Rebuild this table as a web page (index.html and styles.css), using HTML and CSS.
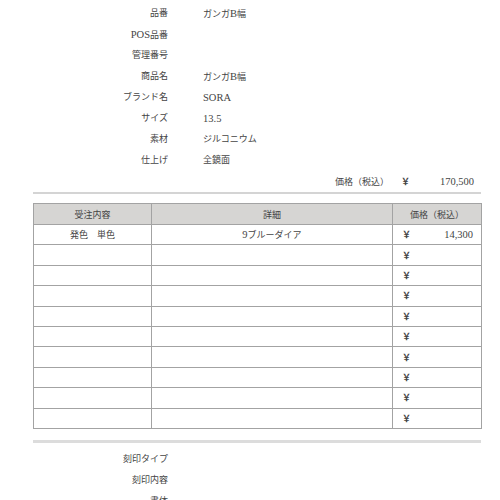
FILE: index.html
```html
<!DOCTYPE html>
<html lang="ja">
<head>
<meta charset="utf-8">
<link rel="stylesheet" href="styles.css">
</head>
<body>
<div class="page">
  <dl class="info">
    <dt>品番</dt><dd>ガンガ<span class="latin">B</span>幅</dd>
    <dt><span class="latin">POS</span>品番</dt><dd></dd>
    <dt>管理番号</dt><dd></dd>
    <dt>商品名</dt><dd>ガンガ<span class="latin">B</span>幅</dd>
    <dt>ブランド名</dt><dd><span class="latin">SORA</span></dd>
    <dt>サイズ</dt><dd><span class="latin">13.5</span></dd>
    <dt>素材</dt><dd>ジルコニウム</dd>
    <dt>仕上げ</dt><dd>全鏡面</dd>
  </dl>
  <div class="price-row">
    <span class="price-label">価格（税込）</span>
    <span class="yen">￥</span>
    <span class="amount latin">170,500</span>
  </div>
  <hr class="rule">
  <table class="orders">
    <colgroup>
      <col class="c1"><col class="c2"><col class="c3">
    </colgroup>
    <thead>
      <tr><th>受注内容</th><th>詳細</th><th>価格（税込）</th></tr>
    </thead>
    <tbody>
      <tr><td class="center">発色　単色</td><td class="center"><span class="latin">9</span>ブルーダイア</td><td><div class="money"><span class="yen-cell">￥</span><span class="latin">14,300</span></div></td></tr>
      <tr><td></td><td></td><td><div class="money"><span class="yen-cell">￥</span></div></td></tr>
      <tr><td></td><td></td><td><div class="money"><span class="yen-cell">￥</span></div></td></tr>
      <tr><td></td><td></td><td><div class="money"><span class="yen-cell">￥</span></div></td></tr>
      <tr><td></td><td></td><td><div class="money"><span class="yen-cell">￥</span></div></td></tr>
      <tr><td></td><td></td><td><div class="money"><span class="yen-cell">￥</span></div></td></tr>
      <tr><td></td><td></td><td><div class="money"><span class="yen-cell">￥</span></div></td></tr>
      <tr><td></td><td></td><td><div class="money"><span class="yen-cell">￥</span></div></td></tr>
      <tr><td></td><td></td><td><div class="money"><span class="yen-cell">￥</span></div></td></tr>
      <tr><td></td><td></td><td><div class="money"><span class="yen-cell">￥</span></div></td></tr>
    </tbody>
  </table>
  <hr class="rule thick">
  <dl class="info lower">
    <dt>刻印タイプ</dt><dd></dd>
    <dt>刻印内容</dt><dd></dd>
    <dt>書体</dt><dd></dd>
  </dl>
</div>
</body>
</html>
```
FILE: styles.css
```css
html, body {
  margin: 0;
  padding: 0;
  background: #fff;
}
body {
  font-family: "Liberation Serif", "Noto Sans CJK JP", serif;
  font-size: 9px;
  color: #444;
}
.latin {
  font-size: 10.5px;
}
.page {
  padding: 3px 19px 0 33px;
  width: 448px;
}
.info {
  display: grid;
  grid-template-columns: 135px 1fr;
  grid-auto-rows: 21px;
  margin: 0;
  line-height: 21px;
}
.info dt {
  text-align: right;
  margin: 0;
}
.info dd {
  margin: 0;
  padding-left: 35px;
}
.price-row {
  display: flex;
  justify-content: flex-end;
  align-items: center;
  height: 21px;
  padding-right: 7px;
}
.yen {
  margin-left: 12px;
  font-weight: bold;
}
.amount {
  width: 64px;
  text-align: right;
}
.rule {
  border: 0;
  border-top: 2px solid #d4d4d4;
  margin: 0;
  height: 0;
}
.thick {
  border-top: 3px solid #dcdcdc;
  margin-top: 11px;
}
.orders {
  margin-top: 9px;
  width: 448px;
  border-collapse: collapse;
  table-layout: fixed;
}
.c1 { width: 118px; }
.c2 { width: 241px; }
.c3 { width: 89px; }
.orders th, .orders td {
  border: 1px solid #a3a3a3;
  padding: 0;
  font-weight: normal;
}
.orders th {
  background: #d6d5d3;
  height: 20px;
  text-align: center;
}
.orders td {
  height: 19.4px;
}
.center {
  text-align: center;
}
.money {
  display: flex;
  justify-content: space-between;
  align-items: center;
  padding: 0 8px 0 9px;
}
.yen-cell {
  font-weight: bold;
}
.lower {
  margin-top: 6px;
}
```
